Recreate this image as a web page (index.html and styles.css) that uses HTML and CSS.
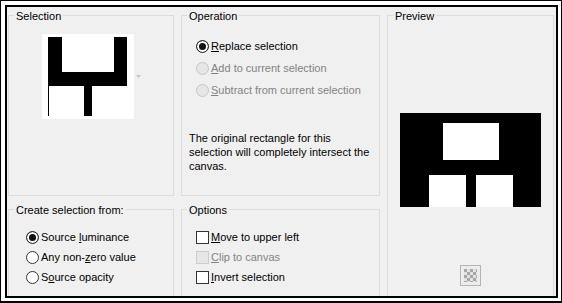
FILE: index.html
```html
<!DOCTYPE html>
<html>
<head>
<meta charset="utf-8">
<title>Selection</title>
<link rel="stylesheet" href="styles.css">
</head>
<body>
<div class="frame">
  <div class="dialog">
    <div class="layout">
      <fieldset class="group g-selection">
        <legend>Selection</legend>
        <div class="sel-row">
          <svg class="sel-thumb" width="92" height="85" viewBox="0 0 92 85">
            <rect width="92" height="85" fill="#fff"/>
            <path d="M6 3h14v35h52V3h13v49H50v30h-8V52H7v30H6z" fill="#000"/>
          </svg>
          <svg class="sel-drop" width="5" height="3" viewBox="0 0 5 3">
            <path d="M0 0h5L2.5 3z" fill="#c8c8c8"/>
          </svg>
        </div>
      </fieldset>

      <fieldset class="group g-operation">
        <legend>Operation</legend>
        <div class="opt-list op-list">
          <div class="opt"><span class="radio checked"></span><span><u>R</u>eplace selection</span></div>
          <div class="opt disabled"><span class="radio"></span><span><u>A</u>dd to current selection</span></div>
          <div class="opt disabled"><span class="radio"></span><span><u>S</u>ubtract from current selection</span></div>
        </div>
        <div class="note">The original rectangle for this selection will completely intersect the canvas.</div>
      </fieldset>

      <fieldset class="group g-preview">
        <legend>Preview</legend>
        <div class="pv">
          <svg class="pv-img" width="141" height="94" viewBox="0 0 141 94">
            <rect width="141" height="94" fill="#000"/>
            <rect x="43" y="10" width="56" height="37" fill="#fff"/>
            <rect x="29" y="62" width="37" height="32" fill="#fff"/>
            <rect x="76" y="62" width="37" height="32" fill="#fff"/>
          </svg>
          <svg class="pv-trans" width="21" height="21" viewBox="0 0 21 21">
            <rect x="0.5" y="0.5" width="20" height="20" fill="#ececec" stroke="#b4b4b4"/>
            <rect x="4" y="4" width="13" height="13" fill="#e2e2e2"/>
            <g fill="#a6a6a6">
              <rect x="4" y="4" width="3" height="3"/><rect x="10" y="4" width="3" height="3"/><rect x="16" y="4" width="1" height="3"/>
              <rect x="7" y="7" width="3" height="3"/><rect x="13" y="7" width="3" height="3"/>
              <rect x="4" y="10" width="3" height="3"/><rect x="10" y="10" width="3" height="3"/><rect x="16" y="10" width="1" height="3"/>
              <rect x="7" y="13" width="3" height="3"/><rect x="13" y="13" width="3" height="3"/>
              <rect x="4" y="16" width="3" height="1"/><rect x="10" y="16" width="3" height="1"/><rect x="16" y="16" width="1" height="1"/>
            </g>
          </svg>
        </div>
      </fieldset>

      <fieldset class="group g-create">
        <legend>Create selection from:</legend>
        <div class="opt-list src-list">
          <div class="opt"><span class="radio checked"></span><span>Source <u>l</u>uminance</span></div>
          <div class="opt"><span class="radio"></span><span>Any non-<u>z</u>ero value</span></div>
          <div class="opt"><span class="radio"></span><span>S<u>o</u>urce opacity</span></div>
        </div>
      </fieldset>

      <fieldset class="group g-options">
        <legend>Options</legend>
        <div class="opt-list chk-list">
          <div class="opt"><span class="check"></span><span><u>M</u>ove to upper left</span></div>
          <div class="opt disabled"><span class="check"></span><span><u>C</u>lip to canvas</span></div>
          <div class="opt"><span class="check"></span><span><u>I</u>nvert selection</span></div>
        </div>
      </fieldset>
    </div>
  </div>
</div>
</body>
</html>
```

FILE: styles.css
```css
html, body {
  margin: 0;
  padding: 0;
  background: #fff;
}

body {
  font-family: "Segoe UI", "Liberation Sans", Arial, sans-serif;
  font-size: 11px;
  color: #000;
}

.frame {
  box-sizing: border-box;
  width: 562px;
  height: 303px;
  border: 1px solid #000;
  border-bottom-width: 2px;
  padding: 4px 3px 3px 4px;
  background: #fff;
}

.dialog {
  box-sizing: border-box;
  height: 100%;
  border: 2px solid #000;
  background: #f0f0f0;
  overflow: hidden;
}

.layout {
  display: grid;
  grid-template-columns: 166px 199px 167px;
  grid-template-rows: 188px 120px;
  column-gap: 7px;
  row-gap: 6px;
  padding: 1px 0 0 1px;
}

.group {
  box-sizing: border-box;
  margin: 0;
  padding: 0;
  min-width: 0;
  border: 1px solid #dcdcdc;
}

.group legend {
  padding: 2px 2px 0;
  margin-left: 5px;
  line-height: 13px;
}

.g-selection { grid-column: 1; grid-row: 1; }
.g-operation { grid-column: 2; grid-row: 1; }
.g-preview { grid-column: 3; grid-row: 1 / span 2; }
.g-create { grid-column: 1; grid-row: 2; }
.g-options { grid-column: 2; grid-row: 2; }

/* Selection thumbnail */
.sel-row {
  display: flex;
  align-items: flex-start;
  margin: 11px 0 0 33px;
}

.sel-thumb { display: block; }

.sel-drop {
  display: block;
  margin: 41px 0 0 2px;
}

/* option rows */
.opt-list {
  display: flex;
  flex-direction: column;
}

.opt {
  display: flex;
  align-items: center;
  gap: 2px;
  height: 20px;
  white-space: nowrap;
}

.op-list { margin: 12px 0 0 14px; }
.op-list .opt { height: 22px; }

.src-list { margin: 10px 0 0 17px; }
.chk-list { margin: 10px 0 0 14px; }

.opt u { text-decoration: underline; text-underline-offset: 1px; }

.opt.disabled { color: #838383; }

.radio {
  box-sizing: border-box;
  flex: none;
  width: 13px;
  height: 13px;
  border: 1px solid #333;
  border-radius: 50%;
  background: #fff;
}

.radio.checked {
  background: #111;
  box-shadow: inset 0 0 0 2px #fff;
}

.opt.disabled .radio {
  border-color: #c6c6c6;
  background: #e6e6e6;
}

.check {
  box-sizing: border-box;
  flex: none;
  width: 13px;
  height: 13px;
  border: 1px solid #333;
  background: #fff;
}

.opt.disabled .check {
  border-color: #cccccc;
  background: #e6e6e6;
}

.note {
  margin: 30px 0 0 7px;
  width: 186px;
  line-height: 14px;
}

/* preview */
.pv {
  display: flex;
  flex-direction: column;
  align-items: center;
}

.pv-img {
  display: block;
  margin-top: 90px;
}

.pv-trans {
  display: block;
  margin-top: 58px;
}
```
